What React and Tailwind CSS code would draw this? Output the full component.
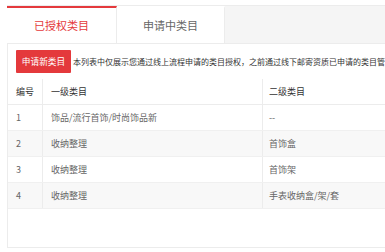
import { useState } from 'react';

const rows = [
  { id: 1, first: '饰品/流行首饰/时尚饰品新', second: '--' },
  { id: 2, first: '收纳整理', second: '首饰盒' },
  { id: 3, first: '收纳整理', second: '首饰架' },
  { id: 4, first: '收纳整理', second: '手表收纳盒/架/套' },
];

const tabs = ['已授权类目', '申请中类目'];

export default function App() {
  const [activeTab, setActiveTab] = useState(0);

  return (
    <div
      className="w-[385px] h-[252px] overflow-hidden bg-white"
      style={{ fontFamily: '"Noto Sans CJK SC", "Noto Sans", sans-serif' }}
    >
      <div className="w-[760px] pl-[7px] pt-[5px]">
        {/* tabs */}
        <div className="flex h-[39px] bg-[#f5f5f5] border-t border-b border-[#ececec]">
          {tabs.map((tab, i) => {
            const isActive = activeTab === i;
            return (
              <button
                key={tab}
                onClick={() => setActiveTab(i)}
                className={`flex items-center justify-center bg-white border-r border-[#ececec] text-[11px] ${
                  i === 0 ? 'w-[110px]' : 'w-[108px]'
                } ${isActive ? 'border-t-2 border-t-[#e4393c] text-[#e4393c]' : 'border-t-2 border-t-white text-[#666]'}`}
              >
                {tab}
              </button>
            );
          })}
        </div>

        {/* panel */}
        <div className="h-[204px] border-l border-b border-[#ececec]">
          <div className="flex items-center gap-[2px] pl-2 pt-[6px]">
            <button className="h-[23px] w-[55px] bg-[#e4393c] text-white text-[8.7px] rounded-[1px]">
              申请新类目
            </button>
            <span className="text-[8px] text-[#333] whitespace-nowrap">
              本列表中仅展示您通过线上流程申请的类目授权，之前通过线下邮寄资质已申请的类目管理请联系您的招商对接人员进行查询
            </span>
          </div>

          <div className="mt-[6px] text-[9px]">
            <div className="flex h-[26px] items-center border-b border-[#ececec] text-[#333]">
              <div className="w-[35px] h-full flex items-center pl-2 border-r border-[#ececec]">编号</div>
              <div className="w-[220px] h-full flex items-center pl-2 border-r border-[#ececec]">一级类目</div>
              <div className="flex-1 h-full flex items-center pl-[6px]">二级类目</div>
            </div>
            {rows.map((row, i) => (
              <div
                key={row.id}
                className={`flex h-[26px] items-center border-b border-[#f0f0f0] text-[#666] ${
                  i % 2 === 1 ? 'bg-[#f8f8f8]' : 'bg-white'
                }`}
              >
                <div className="w-[35px] h-full flex items-center pl-2 border-r border-[#ececec]">{row.id}</div>
                <div className="w-[220px] h-full flex items-center pl-2 border-r border-[#ececec]">{row.first}</div>
                <div className="flex-1 h-full flex items-center pl-[6px]">{row.second}</div>
              </div>
            ))}
          </div>
        </div>
      </div>
    </div>
  );
}
